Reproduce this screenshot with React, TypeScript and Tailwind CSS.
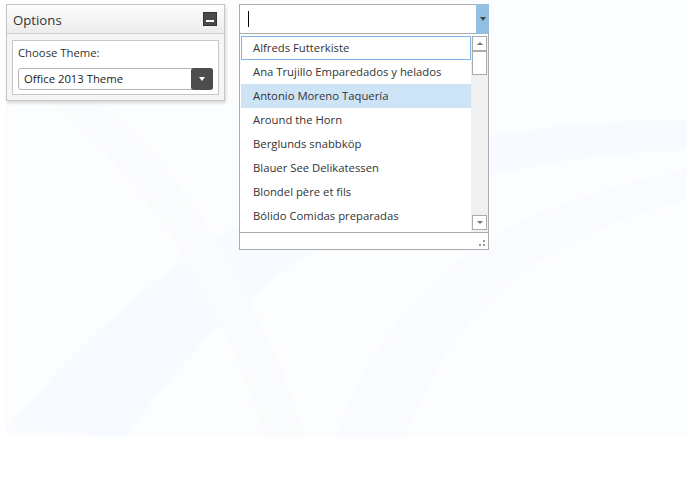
import React from 'react';

const customers = [
  'Alfreds Futterkiste',
  'Ana Trujillo Emparedados y helados',
  'Antonio Moreno Taquería',
  'Around the Horn',
  'Berglunds snabbköp',
  'Blauer See Delikatessen',
  'Blondel père et fils',
  'Bólido Comidas preparadas',
];

function Backdrop() {
  // faint swoosh image behind the demo
  return (
    <div className="absolute left-[6px] top-0 w-[681px] h-[437px] bg-[#fcfdfe] overflow-hidden">
      <svg width="681" height="437" viewBox="0 0 681 437">
        <path d="M0 430 C 150 250, 330 120, 681 120 L 681 150 C 420 160, 260 240, 120 437 Z" fill="#f7fafe" />
        <path d="M330 437 C 380 300, 470 210, 681 170 L 681 200 C 520 240, 440 320, 400 437 Z" fill="#f9fbfe" />
        <path d="M40 60 C 120 120, 220 200, 300 437 L 260 437 C 200 260, 120 160, 40 100 Z" fill="#fafbfd" />
      </svg>
    </div>
  );
}

function OptionsPanel() {
  return (
    <div className="w-[219px] border border-[#c6c6c6] bg-[#f5f5f5] shadow-[1px_2px_3px_rgba(0,0,0,0.15)]">
      <div className="h-[29px] flex items-center justify-between pl-[6px] pr-[7px] border-b border-[#d0d0d0] bg-gradient-to-b from-[#fdfdfd] to-[#ececec]">
        <span className="text-[13.2px] text-[#333] pt-[3px]">Options</span>
        <div className="w-[14px] h-[14px] bg-[#4a4a4a] border border-[#333] flex items-end justify-center pb-[3px]">
          <div className="w-[8px] h-[2px] bg-white" />
        </div>
      </div>
      <div className="p-[5px] pt-[6px]">
        <div className="border border-[#c6c6c6] bg-white px-[5px] pt-[4px] pb-[4px]">
          <div className="text-[11.3px] text-[#333] leading-[16px]">Choose Theme:</div>
          <div className="mt-[7px] h-[22px] flex items-center rounded-[3px] border border-[#b5b5b5] bg-white">
            <span className="flex-1 pl-[5px] text-[11.3px] text-[#222]">Office 2013 Theme</span>
            <div className="w-[22px] h-[22px] -mr-px rounded-[3px] bg-[#4d4d4d] flex items-center justify-center">
              <div className="w-0 h-0 border-l-[3px] border-r-[3px] border-t-[4px] border-l-transparent border-r-transparent border-t-white" />
            </div>
          </div>
        </div>
      </div>
    </div>
  );
}

function ScrollArrow({ up }: { up: boolean }) {
  return (
    <div className="h-[15px] mx-px border border-[#ababab] bg-white flex items-center justify-center">
      <div
        className={
          up
            ? 'w-0 h-0 border-l-[3px] border-r-[3px] border-b-[3px] border-l-transparent border-r-transparent border-b-[#777]'
            : 'w-0 h-0 border-l-[3px] border-r-[3px] border-t-[3px] border-l-transparent border-r-transparent border-t-[#777]'
        }
      />
    </div>
  );
}

function ComboBox() {
  return (
    <div className="w-[250px]">
      <div className="h-[30px] flex border border-[#ababab] bg-white">
        <div className="flex-1 flex items-center pl-[8px]">
          <div className="w-px h-[16px] bg-black" />
        </div>
        <div className="w-[13px] -my-px -mr-px bg-[#92c0e0] flex items-center justify-center">
          <div className="w-0 h-0 border-l-[3px] border-r-[3px] border-t-[4px] border-l-transparent border-r-transparent border-t-[#444]" />
        </div>
      </div>
      <div className="border border-t-0 border-[#ababab] bg-white">
        <div className="flex h-[198px] pt-[2px] pl-px">
          <div className="flex-1 flex flex-col">
            {customers.map((c, i) => (
              <div
                key={c}
                className={
                  'h-[24px] shrink-0 flex items-center text-[11.3px] text-[#333] ' +
                  (i === 0 ? 'border border-[#7eb4ea] pl-[11px]' : 'pl-[12px]') +
                  (i === 2 ? ' bg-[#cde4f7]' : '')
                }
              >
                {c}
              </div>
            ))}
          </div>
          <div className="w-[17px] flex flex-col bg-[#f0f0f0] pb-[2px]">
            <ScrollArrow up />
            <div className="h-[24px] mx-px border border-[#ababab] bg-white" />
            <div className="flex-1" />
            <ScrollArrow up={false} />
          </div>
        </div>
        <div className="h-[17px] border-t border-[#ababab] flex items-end justify-end pr-[3px] pb-[3px]">
          <div className="grid grid-cols-2 gap-[2px]">
            <div className="w-[2px] h-[2px]" />
            <div className="w-[2px] h-[2px] bg-[#999]" />
            <div className="w-[2px] h-[2px] bg-[#999]" />
            <div className="w-[2px] h-[2px] bg-[#999]" />
          </div>
        </div>
      </div>
    </div>
  );
}

export default function App() {
  return (
    <div className="relative w-[700px] h-[500px] bg-white overflow-hidden" style={{ fontFamily: '"Open Sans", "Noto Sans", sans-serif' }}>
      <Backdrop />
      <div className="relative flex items-start gap-[14px] pl-[6px] pt-[4px]">
        <OptionsPanel />
        <ComboBox />
      </div>
    </div>
  );
}
